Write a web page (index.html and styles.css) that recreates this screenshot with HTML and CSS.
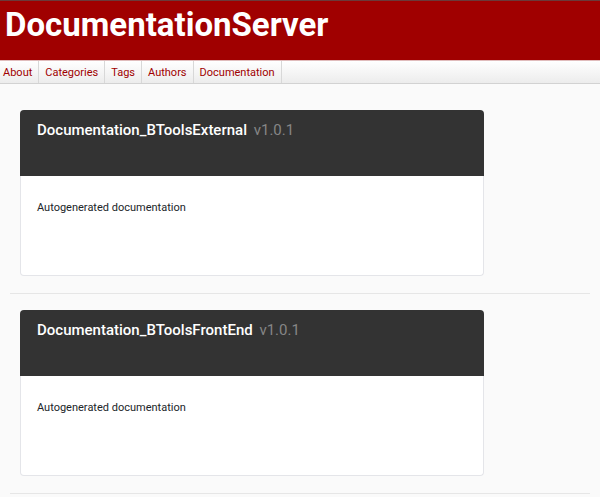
FILE: index.html
```
<!DOCTYPE html>
<html lang="en">
<head>
<meta charset="utf-8">
<meta name="viewport" content="width=device-width, initial-scale=1">
<title>DocumentationServer</title>
<link rel="stylesheet" href="styles.css">
</head>
<body>
<header class="banner">
  <h1 class="banner-title">DocumentationServer</h1>
</header>
<nav class="menu">
  <a class="menu-link" href="#about">About</a>
  <a class="menu-link" href="#categories">Categories</a>
  <a class="menu-link" href="#tags">Tags</a>
  <a class="menu-link" href="#authors">Authors</a>
  <a class="menu-link" href="#documentation">Documentation</a>
</nav>
<main class="content">
  <section class="entry">
    <article class="card">
      <h2 class="card-header">Documentation_BToolsExternal <span class="version">v1.0.1</span></h2>
      <p class="card-body">Autogenerated documentation</p>
    </article>
  </section>
  <section class="entry">
    <article class="card">
      <h2 class="card-header">Documentation_BToolsFrontEnd <span class="version">v1.0.1</span></h2>
      <p class="card-body">Autogenerated documentation</p>
    </article>
  </section>
</main>
</body>
</html>
```

FILE: styles.css
```
* {
  box-sizing: border-box;
}

body {
  margin: 0;
  background: #fafafa;
  color: #212529;
  font-family: Roboto, "Liberation Sans", sans-serif;
  font-size: 11px;
  line-height: 16px;
}

.banner {
  padding: 4px 5px 16px;
  border-top: 1px solid #6b3a3a;
  background: #a00000;
}

.banner-title {
  margin: 0;
  color: #fff;
  font-size: 33px;
  font-weight: 700;
  line-height: 39px;
}

.menu {
  display: flex;
  border-top: 1px solid #e0bcbc;
  border-bottom: 1px solid #d2d2d2;
  background: linear-gradient(#fff, #ececec);
}

.menu-link {
  padding: 4px 6px 2px;
  border-right: 1px solid #d8d8d8;
  color: #a00000;
  text-decoration: none;
}

.menu-link:first-child {
  padding-left: 3px;
}

.content {
  padding: 10px 10px 0;
}

.entry {
  padding: 16px 0 17px;
  border-bottom: 1px solid #e6e6e6;
}

.card {
  width: 80%;
  margin-left: 10px;
}

.card-header {
  min-height: 66px;
  margin: 0;
  padding: 10px 17px;
  border-radius: 4px 4px 0 0;
  background: #333;
  color: #fff;
  font-size: 15px;
  font-weight: 500;
  line-height: 20px;
}

.version {
  margin-left: 3px;
  color: #868686;
  font-weight: 400;
}

.card-body {
  min-height: 100px;
  margin: 0;
  padding: 24px 16px;
  border: 1px solid #e4e5e9;
  border-top: 0;
  border-radius: 0 0 4px 4px;
  background: #fff;
}
```
